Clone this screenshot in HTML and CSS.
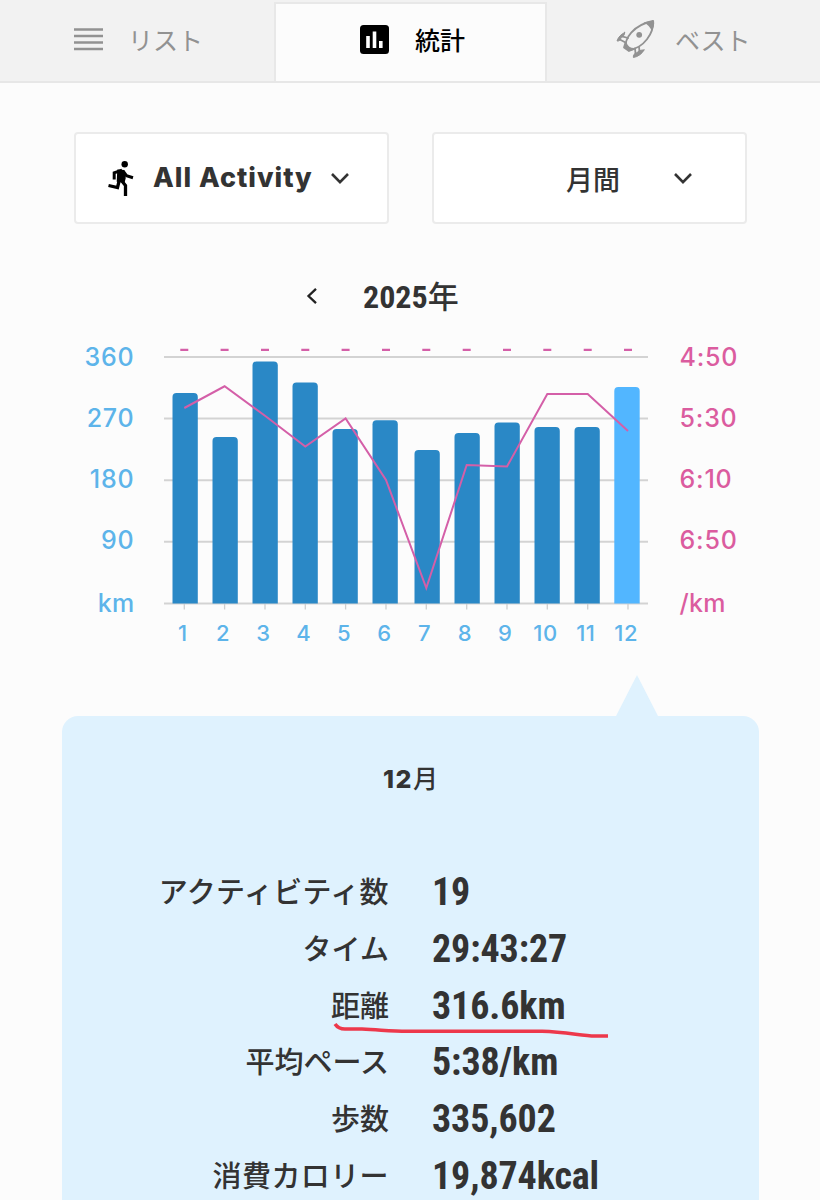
FILE: index.html
```html
<!DOCTYPE html>
<html lang="ja">
<head>
<meta charset="utf-8">
<title>統計</title>
<link rel="stylesheet" href="styles.css">
</head>
<body>
<nav class="tabs">
  <div class="tab tab-list">
    <svg class="icon-list" width="29" height="23" viewBox="0 0 29 23"><path d="M0 1.5h29M0 8h29M0 14.5h29M0 21h29" stroke="#929292" stroke-width="2.7"/></svg>
    <span class="tab-text">リスト</span>
  </div>
  <div class="tab tab-stats active">
    <svg class="icon-stats" width="29" height="29" viewBox="0 0 29 29"><rect width="29" height="29" rx="3.5" fill="#000"/><path d="M8 11v12M14.5 6.5V23M20.8 16v7" stroke="#fff" stroke-width="3.6"/></svg>
    <span class="tab-text">統計</span>
  </div>
  <div class="tab tab-best">
    <svg class="icon-rocket" width="40" height="40" viewBox="0 0 40 40" fill="none" stroke="#929292" stroke-width="1.8" stroke-linecap="round" stroke-linejoin="round">
      <path d="M10 29C8 20 17 6 37 2C38 14 28 29 13 31Z"/>
      <path d="M27.5 3.5L38 1.5C38.7 6 37.5 9 35.8 12C34.5 8.5 31.5 5 27.5 3.5Z" fill="#929292" stroke="none"/>
      <circle cx="23.2" cy="15.8" r="2.9" fill="#929292" stroke="none"/>
      <path d="M9.5 23.5L8 28.5L13 32L18 30C14 30 11 27.5 9.5 23.5Z" fill="#929292"/>
      <path d="M12 19L6 17.3M9.5 23.5L3.8 20.5M19 29.5L19.5 34.3M23 28L23.5 32.3"/>
      <path d="M8.7 13.5C5.2 15 2.1 18.3 1 22C3.4 22.4 4.8 20.6 5 18.5C7 18 8.8 16 8.7 13.5ZM28 31C26.5 34.5 22 37.8 17.4 38.5C17 36.2 18.3 34.2 20.5 34C22 31.8 25.5 30.6 28 31Z" fill="#929292" stroke-width="1"/>
    </svg>
    <span class="tab-text">ベスト</span>
  </div>
</nav>

<main class="content">
  <div class="filters">
    <div class="select select-activity">
      <svg class="icon-run" width="26" height="35" viewBox="0 0 26 35" fill="none" stroke="#000">
        <circle cx="16.7" cy="3.3" r="3.2" fill="#000" stroke="none"/>
        <path d="M10 9.3L15.5 9.8L17 17L16 21L9.5 20Z" fill="#000" stroke-width="1.5"/>
        <path d="M14 9.2L6.2 11.8V18.5M15 10L18.5 14.7L25 16.7" stroke-width="3"/>
        <path d="M11.5 18.5L9.5 26.5L.5 24.5M13.5 19.5L17.5 24.5V35" stroke-width="3.3"/>
      </svg>
      <span class="activity-text">All Activity</span>
      <svg class="chevron" width="20" height="13" viewBox="0 0 20 13"><path d="M2 2L10 10.2L18 2" fill="none" stroke="#333" stroke-width="2.6"/></svg>
    </div>
    <div class="select select-period">
      <span class="period-text">月間</span>
      <svg class="chevron" width="20" height="13" viewBox="0 0 20 13"><path d="M2 2L10 10.2L18 2" fill="none" stroke="#333" stroke-width="2.6"/></svg>
    </div>
  </div>

  <div class="year">
    <svg width="12" height="18" viewBox="0 0 12 18"><path d="M10 1.8L2.5 9L10 16.2" fill="none" stroke="#222" stroke-width="2.3"/></svg>
    <h1 class="year-text"><span class="condensed">2025</span>年</h1>
  </div>

  <section class="chart">
    <div class="axis axis-distance"><span>360</span><span>270</span><span>180</span><span>90</span><span class="unit">km</span></div>
    <div class="plot">
      <svg class="plot-area" width="484" height="270" viewBox="164 340 484 270">
        <path d="M164 357H648M164 418.5H648M164 480.3H648M164 541.7H648M164 603.5H648" stroke="#d3d3d3" stroke-width="2"/>
        <path d="M184.3 604v5.5M224.6 604v5.5M265 604v5.5M305.3 604v5.5M345.6 604v5.5M386 604v5.5M426.3 604v5.5M466.7 604v5.5M507 604v5.5M547.3 604v5.5M587.7 604v5.5M628 604v5.5" stroke="#cfcfcf" stroke-width="1.3"/>
        <g fill="#2a88c6">
          <path d="M172.5 603.5V397q0-4 4-4h17.3q4 0 4 4V603.5Z"/>
          <path d="M212.5 603.5V441q0-4 4-4h17.3q4 0 4 4V603.5Z"/>
          <path d="M252.5 603.5V365.5q0-4 4-4h17.3q4 0 4 4V603.5Z"/>
          <path d="M292.5 603.5V386.5q0-4 4-4h17.3q4 0 4 4V603.5Z"/>
          <path d="M332.5 603.5V433q0-4 4-4h17.3q4 0 4 4V603.5Z"/>
          <path d="M372.5 603.5V424.3q0-4 4-4h17.3q4 0 4 4V603.5Z"/>
          <path d="M414.5 603.5V454q0-4 4-4h17.3q4 0 4 4V603.5Z"/>
          <path d="M454.5 603.5V437q0-4 4-4h17.3q4 0 4 4V603.5Z"/>
          <path d="M494.5 603.5V426.5q0-4 4-4h17.3q4 0 4 4V603.5Z"/>
          <path d="M534.5 603.5V431q0-4 4-4h17.3q4 0 4 4V603.5Z"/>
          <path d="M574.5 603.5V431q0-4 4-4h17.3q4 0 4 4V603.5Z"/>
        </g>
        <path d="M614.3 603.5V391q0-4 4-4h17.4q4 0 4 4V603.5Z" fill="#52b6ff"/>
        <path class="dashes" d="M180.3 349.8h8M220.6 349.8h8M261 349.8h8M301.3 349.8h8M341.6 349.8h8M382 349.8h8M422.3 349.8h8M462.7 349.8h8M503 349.8h8M543.3 349.8h8M583.7 349.8h8M624 349.8h8"/>
        <path class="pace" d="M184.3 408L224.6 386.3L265 415.8L305.3 446.5L345.6 418.5L386 480L426.3 588L466.7 465L507 466.5L547.3 394L587.7 394L628 431"/>
      </svg>
      <div class="months"><span>1</span><span>2</span><span>3</span><span>4</span><span>5</span><span>6</span><span>7</span><span>8</span><span>9</span><span>10</span><span>11</span><span>12</span></div>
    </div>
    <div class="axis axis-pace"><span>4:50</span><span>5:30</span><span>6:10</span><span>6:50</span><span class="unit">/km</span></div>
  </section>

  <section class="summary">
    <svg class="pointer" width="42" height="42" viewBox="0 0 42 42"><path d="M21 0L42 41V42H0V41Z" fill="#dff2fe"/></svg>
    <h2 class="month"><b>12</b>月</h2>
    <dl class="stats">
      <dt class="wide">アクティビティ数</dt><dd class="condensed">19</dd>
      <dt>タイム</dt><dd class="condensed">29:43:27</dd>
      <dt>距離</dt><dd class="condensed">316.6km</dd>
      <dt>平均ペース</dt><dd class="condensed">5:38/km</dd>
      <dt>歩数</dt><dd class="condensed">335,602</dd>
      <dt class="wide">消費カロリー</dt><dd class="condensed">19,874kcal</dd>
    </dl>
    <svg class="underline" width="280" height="20" viewBox="0 0 280 20"><path d="M3 4C5 7 9 9 13 9L30 9C50 10 60 11.3 75 11.3H210C235 12 250 16 263 16H276" fill="none" stroke="#ed384b" stroke-width="3.5"/></svg>
  </section>
</main>
</body>
</html>
```
FILE: styles.css
```css
* { box-sizing: border-box; }
body {
  margin: 0;
  background: #fcfcfc;
  color: #333;
  font-family: Inter, "Noto Sans CJK JP", sans-serif;
}
svg { display: block; flex: none; }

.tabs {
  display: grid;
  grid-template-columns: 274px 273px 273px;
  height: 83px;
  background: #f2f2f2;
  border-bottom: 2px solid #e7e7e7;
}
.tab {
  display: flex;
  align-items: flex-start;
  color: #929292;
  font-size: 25px;
  line-height: 36px;
}
.tab.active {
  margin-top: 2px;
  background: #fcfcfc;
  border: 2px solid #e8e8e8;
  border-bottom: 0;
  color: #000;
  font-weight: 500;
}
.tab-list { padding: 28px 0 0 74px; }
.tab-list .tab-text { margin: -5px 0 0 25px; }
.tab-stats { padding: 21px 0 0 84px; }
.tab-stats .tab-text { margin: -2px 0 0 26px; }
.tab-best { padding: 19px 0 0 69px; }
.tab-best .tab-text { margin: 4px 0 0 19px; }

.filters {
  display: flex;
  gap: 43px;
  padding: 49px 0 0 74px;
}
.select {
  display: flex;
  align-items: flex-start;
  width: 315px;
  height: 92px;
  background: #fff;
  border: 2px solid #ebebeb;
  border-radius: 4px;
}
.icon-run { margin: 27px 0 0 32px; }
.activity-text {
  width: 161px;
  margin: 26px 0 0 19px;
  font-size: 27px;
  font-weight: 850;
  line-height: 36px;
  letter-spacing: 1px;
  white-space: nowrap;
}
.select-activity .chevron { margin: 38px 0 0 16px; }
.period-text {
  margin: 28px 0 0 132px;
  font-size: 27px;
  font-weight: 500;
  line-height: 38px;
}
.select-period .chevron { margin: 38px 0 0 53px; }

.year {
  display: flex;
  align-items: center;
  gap: 45px;
  height: 40px;
  margin: 52px 0 0 306px;
}
.year-text {
  margin: 0;
  padding-top: 1px;
  font-size: 31px;
  font-weight: 500;
  line-height: 40px;
}
.condensed {
  font-family: "Roboto Condensed", Roboto, "Noto Sans CJK JP", sans-serif;
  font-stretch: 75%;
  font-weight: 700;
}
.year .condensed { font-size: 32px; }

.chart {
  display: flex;
  height: 310px;
  margin: 24px 0 0 74px;
}
.axis {
  display: grid;
  grid-template-rows: 61px 61px 61px 62px 62px;
  height: 307px;
  margin-top: -14px;
  font-size: 25px;
  font-weight: 500;
  line-height: 62px;
  letter-spacing: .8px;
}
.axis-distance { width: 60.5px; color: #5db4ea; text-align: right; }
.axis-pace { margin-left: 31.5px; color: #db5c9f; }
.unit { padding-top: 1px; letter-spacing: .3px; }
.plot { width: 484px; margin-left: 29.5px; }
.months {
  display: grid;
  grid-template-columns: repeat(12, 40.3px);
  margin: 8px 0 0 -1.3px;
  color: #5db4ea;
  font-size: 22px;
  font-weight: 500;
  line-height: 30px;
  letter-spacing: .5px;
  text-align: center;
}
.dashes, .pace { fill: none; stroke: #d45fa8; stroke-width: 2; }
.dashes { stroke-width: 2.2; }

.summary {
  position: relative;
  width: 697px;
  height: 484px;
  margin: 66px 0 0 62px;
  background: #dff2fe;
  border-radius: 16px 16px 0 0;
}
.pointer { position: absolute; left: 554px; top: -41px; }
.month {
  margin: 0;
  padding-top: 44px;
  font-size: 25px;
  font-weight: 500;
  line-height: 38px;
  text-align: center;
}
.month b { font-weight: 850; letter-spacing: 1.5px; }
.stats {
  display: grid;
  grid-template-columns: 327px 1fr;
  column-gap: 43px;
  grid-template-rows: repeat(5, 56.8px) 50px;
  margin: 66px 0 0;
  line-height: 57px;
}
.stats dt {
  font-size: 29px;
  font-weight: 500;
  text-align: right;
  white-space: nowrap;
}
.stats .wide { letter-spacing: .4px; }
.stats dd { margin: 0; font-size: 38px; letter-spacing: -.1px; }
.underline { position: absolute; left: 270px; top: 304px; }
```
